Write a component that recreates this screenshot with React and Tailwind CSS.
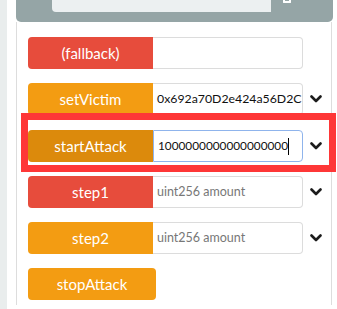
import React from 'react';

const Chevron = () => (
  <svg width="12" height="8" viewBox="0 0 12 8" className="block">
    <path d="M1.5 1.5 L6 6 L10.5 1.5" fill="none" stroke="#1c1c1c" strokeWidth="2.6" strokeLinecap="round" strokeLinejoin="round" />
  </svg>
);

const Row = ({ label, color, value, valueSize = 'text-[12.3px]', placeholder, active, chevron = true }) => (
  <div className="flex items-center h-[32px]">
    <button className={`w-[125px] h-full rounded-l-[4px] text-white text-[15px] ${color}`}>{label}</button>
    <div
      className={`w-[150px] h-full flex items-center pl-[4px] rounded-r-[4px] bg-white border overflow-hidden ${
        active ? 'border-[#8fb4ec]' : 'border-[#dcdcdc] border-l-0'
      }`}
    >
      {value ? (
        <span className={`${valueSize} text-[#111] whitespace-nowrap`}>
          {value}
          {active && <span className="inline-block w-px h-[17px] bg-black align-middle" />}
        </span>
      ) : (
        <span className="text-[12.5px] text-[#777]">{placeholder}</span>
      )}
    </div>
    {chevron && (
      <div className="ml-[7px] w-[12px]">
        <Chevron />
      </div>
    )}
  </div>
);

export default function App() {
  return (
    <div className="relative w-[337px] h-[309px] bg-white flex overflow-hidden" style={{ fontFamily: 'Lato, "Open Sans", sans-serif' }}>
      <div className="w-[7px] h-full bg-[#e9eded]" />
      <div className="ml-[9px] w-[317px] flex flex-col">
        <div className="h-[22px] bg-[#95a5a6] rounded-b-[5px] flex items-start shrink-0">
          <div className="ml-[36px] w-[219px] h-[12px] bg-[#ecf0f1] rounded-bl-[4px]" />
          <div className="ml-[12px] w-[8px] h-[3px] border-2 border-t-0 border-white rounded-b-[1px]" />
        </div>
        <div className="w-[316px] h-[283px] border-x border-[#dddddd] pt-[15px] pl-[11px] flex flex-col gap-[14px]">
          <Row label="(fallback)" color="bg-[#e74c3c]" chevron={false} />
          <Row label="setVictim" color="bg-[#f39c12]" value="0x692a70D2e424a56D2C" />
          <div className="pt-px">
            <Row label="startAttack" color="bg-[#dc8a0c]" value="1000000000000000000" valueSize="text-[11.8px]" active />
          </div>
          <Row label="step1" color="bg-[#e74c3c]" placeholder="uint256 amount" />
          <Row label="step2" color="bg-[#f39c12]" placeholder="uint256 amount" />
          <div className="h-[32px]">
            <button className="w-[128px] h-full rounded-[4px] bg-[#f39c12] text-white text-[15px]">stopAttack</button>
          </div>
        </div>
      </div>
      <div className="absolute left-[21px] top-[113px] w-[315px] h-[59px] border-[7px] border-[#fe3737]" />
    </div>
  );
}
